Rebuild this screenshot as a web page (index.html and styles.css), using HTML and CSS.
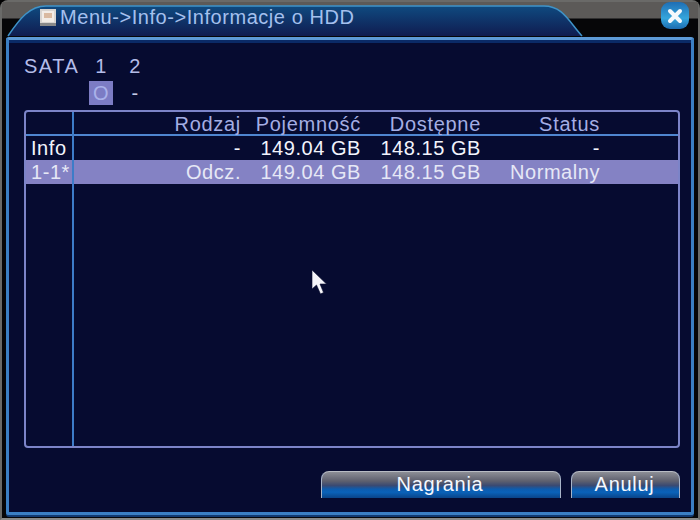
FILE: index.html
```html
<!DOCTYPE html>
<html lang="pl">
<head>
  <meta charset="UTF-8">
  <title>Informacje o HDD</title>
  <link rel="stylesheet" href="styles.css">
</head>
<body>
  <div class="window">
    <div class="titlebar">
      <svg class="title-tab" width="700" height="38" viewBox="0 0 700 38">
        <defs>
          <linearGradient id="tabFill" x1="0" y1="0" x2="0" y2="1">
            <stop offset="0" stop-color="#0f4a80"/>
            <stop offset="1" stop-color="#101c50"/>
          </linearGradient>
        </defs>
        <path d="M8 36 C20 18 30 6 46 6 L544 6 C562 6 568 20 582 36 Z" fill="url(#tabFill)"/>
        <path d="M8 36 C20 18 30 6 46 6 L544 6 C562 6 568 20 582 36" fill="none" stroke="#3f93c8" stroke-width="1.5"/>
      </svg>
      <svg class="title-icon" width="16" height="17" viewBox="0 0 16 17">
        <rect x="0" y="0" width="16" height="17" fill="#d8d4d0"/>
        <rect x="2" y="2" width="12" height="11" fill="#f2ece6"/>
        <rect x="4" y="4" width="8" height="5" fill="#d9b9a0"/>
        <rect x="0" y="14" width="16" height="3" fill="#8a8a8a"/>
      </svg>
      <span class="title-text">Menu-&gt;Info-&gt;Informacje o HDD</span>
      <div class="close-btn">
        <svg width="18" height="18" viewBox="0 0 18 18">
          <path d="M4 4 L14 14 M14 4 L4 14" stroke="#f4f8fc" stroke-width="4" stroke-linecap="round"/>
        </svg>
      </div>
    </div>

    <div class="panel">
      <div class="sata">
        <div class="sata-row">
          <span class="sata-label">SATA</span>
          <span class="sata-cell">1</span>
          <span class="sata-cell">2</span>
        </div>
        <div class="sata-row">
          <span class="sata-label"></span>
          <span class="sata-cell state-on">O</span>
          <span class="sata-cell state-off">-</span>
        </div>
      </div>

      <div class="hdd-table">
        <div class="hdd-row hdd-head">
          <span class="col-name"></span>
          <span>Rodzaj</span>
          <span>Pojemność</span>
          <span>Dostępne</span>
          <span>Status</span>
        </div>
        <div class="hdd-row">
          <span class="col-name">Info</span>
          <span>-</span>
          <span>149.04 GB</span>
          <span>148.15 GB</span>
          <span>-</span>
        </div>
        <div class="hdd-row selected">
          <span class="col-name">1-1*</span>
          <span>Odcz.</span>
          <span>149.04 GB</span>
          <span>148.15 GB</span>
          <span>Normalny</span>
        </div>
        <div class="hdd-rest">
          <span class="col-name"></span>
        </div>
      </div>

      <div class="actions">
        <button class="btn btn-wide">Nagrania</button>
        <button class="btn btn-small">Anuluj</button>
      </div>
    </div>

    <svg class="cursor" width="17" height="26" viewBox="0 0 17 26">
      <path d="M1 1 L1 20 L5.5 16 L9.5 25 L12.5 23.5 L9 15 L15.5 15 Z" fill="#f6f6fa" stroke="#0a0f30" stroke-width="0.6"/>
    </svg>
  </div>
</body>
</html>
```

FILE: styles.css
```css
* {
  box-sizing: border-box;
}

body {
  margin: 0;
  background-color: #000000;
  font-family: "Liberation Sans", Arial, sans-serif;
  font-size: 20px;
  letter-spacing: 0.55px;
}

.window {
  position: relative;
  width: 700px;
  height: 520px;
  padding: 0 4px 3px;
  border: 2px solid #6a6a68;
  border-bottom-color: #8a8a88;
  border-radius: 8px 8px 0 0;
  background-color: #060608;
  display: flex;
  flex-direction: column;
}

/* Title bar */
.titlebar {
  position: relative;
  height: 35px;
  flex: none;
  display: flex;
  align-items: center;
  padding: 0 0 5px 34px;
  background: linear-gradient(#5c5a58 0, #5c5a58 16px, #060608 17px);
  margin: 0 -4px;
}

.title-tab {
  position: absolute;
  left: -2px;
  top: -2px;
}

.title-icon {
  position: relative;
  margin-left: 4px;
}

.title-text {
  position: relative;
  margin-left: 4px;
  color: #a4c0ee;
}

.close-btn {
  position: absolute;
  left: 659px;
  top: 0;
  width: 28px;
  height: 27px;
  border-radius: 9px;
  background: linear-gradient(#1e6eb4, #35a5dc 60%, #1c6cb0);
  display: flex;
  align-items: center;
  justify-content: center;
}

/* Main panel */
.panel {
  flex: 1;
  display: flex;
  flex-direction: column;
  padding: 14px 10px 0 15px;
  background-color: #060b30;
  border: 3px solid #3b7fc4;
  border-top-color: #5d9ad6;
  border-radius: 3px;
  box-shadow: inset 0 3px 0 #0a2a66, 0 2px 0 #123a70;
}

/* SATA selector */
.sata {
  color: #b4bce8;
}

.sata-row {
  display: flex;
  align-items: center;
  height: 24px;
}

.sata-row + .sata-row {
  margin-top: 3px;
}

.sata-label {
  width: 65px;
  letter-spacing: 1.5px;
}

.sata-cell {
  width: 24px;
  height: 24px;
  margin-right: 10px;
  text-align: center;
  line-height: 24px;
}

.state-on {
  background-color: #7c7cc4;
  color: #aab2ea;
}

.state-off {
  color: #c4cae8;
}

/* HDD table */
.hdd-table {
  width: 656px;
  height: 338px;
  margin-top: 5px;
  border: 2px solid #7c84c8;
  border-radius: 4px;
  display: flex;
  flex-direction: column;
  color: #f2f4fc;
}

.hdd-row {
  display: grid;
  grid-template-columns: 48px 167px 120px 120px 119px;
  height: 24px;
  line-height: 24px;
  text-align: right;
  flex: none;
}

.hdd-row .col-name {
  text-align: left;
  padding-left: 5px;
}

.col-name {
  border-right: 2px solid #3d7cc8;
}

.hdd-head {
  height: 24px;
  border-bottom: 2px solid #4f86d0;
  color: #a4aee4;
  letter-spacing: 0.7px;
  line-height: 24px;
}

.selected {
  background-color: #8482c4;
  color: #e6e8f6;
}

.hdd-rest {
  flex: 1;
  display: flex;
}

.hdd-rest .col-name {
  width: 48px;
}

/* Bottom buttons */
.actions {
  display: flex;
  justify-content: flex-end;
  gap: 10px;
  margin-top: 23px;
  padding-right: 1px;
}

.btn {
  height: 27px;
  padding: 0 2px 1px 0;
  border: 0;
  border-left: 1px solid #a8b4c8;
  border-right: 1px solid #a8b4c8;
  border-top: 1px solid #b8bcc4;
  border-radius: 8px 8px 0 0;
  background: linear-gradient(#8c8e96 0, #5e606e 35%, #3a4a72 52%, #0d5cae 66%, #0a62b8 78%, #0a4488 100%);
  color: #f4f8ff;
  font-family: inherit;
  font-size: 20px;
  letter-spacing: 0.7px;
}

.btn-wide {
  width: 240px;
}

.btn-small {
  width: 109px;
}

/* Mouse pointer */
.cursor {
  position: absolute;
  left: 309px;
  top: 267px;
}
```
